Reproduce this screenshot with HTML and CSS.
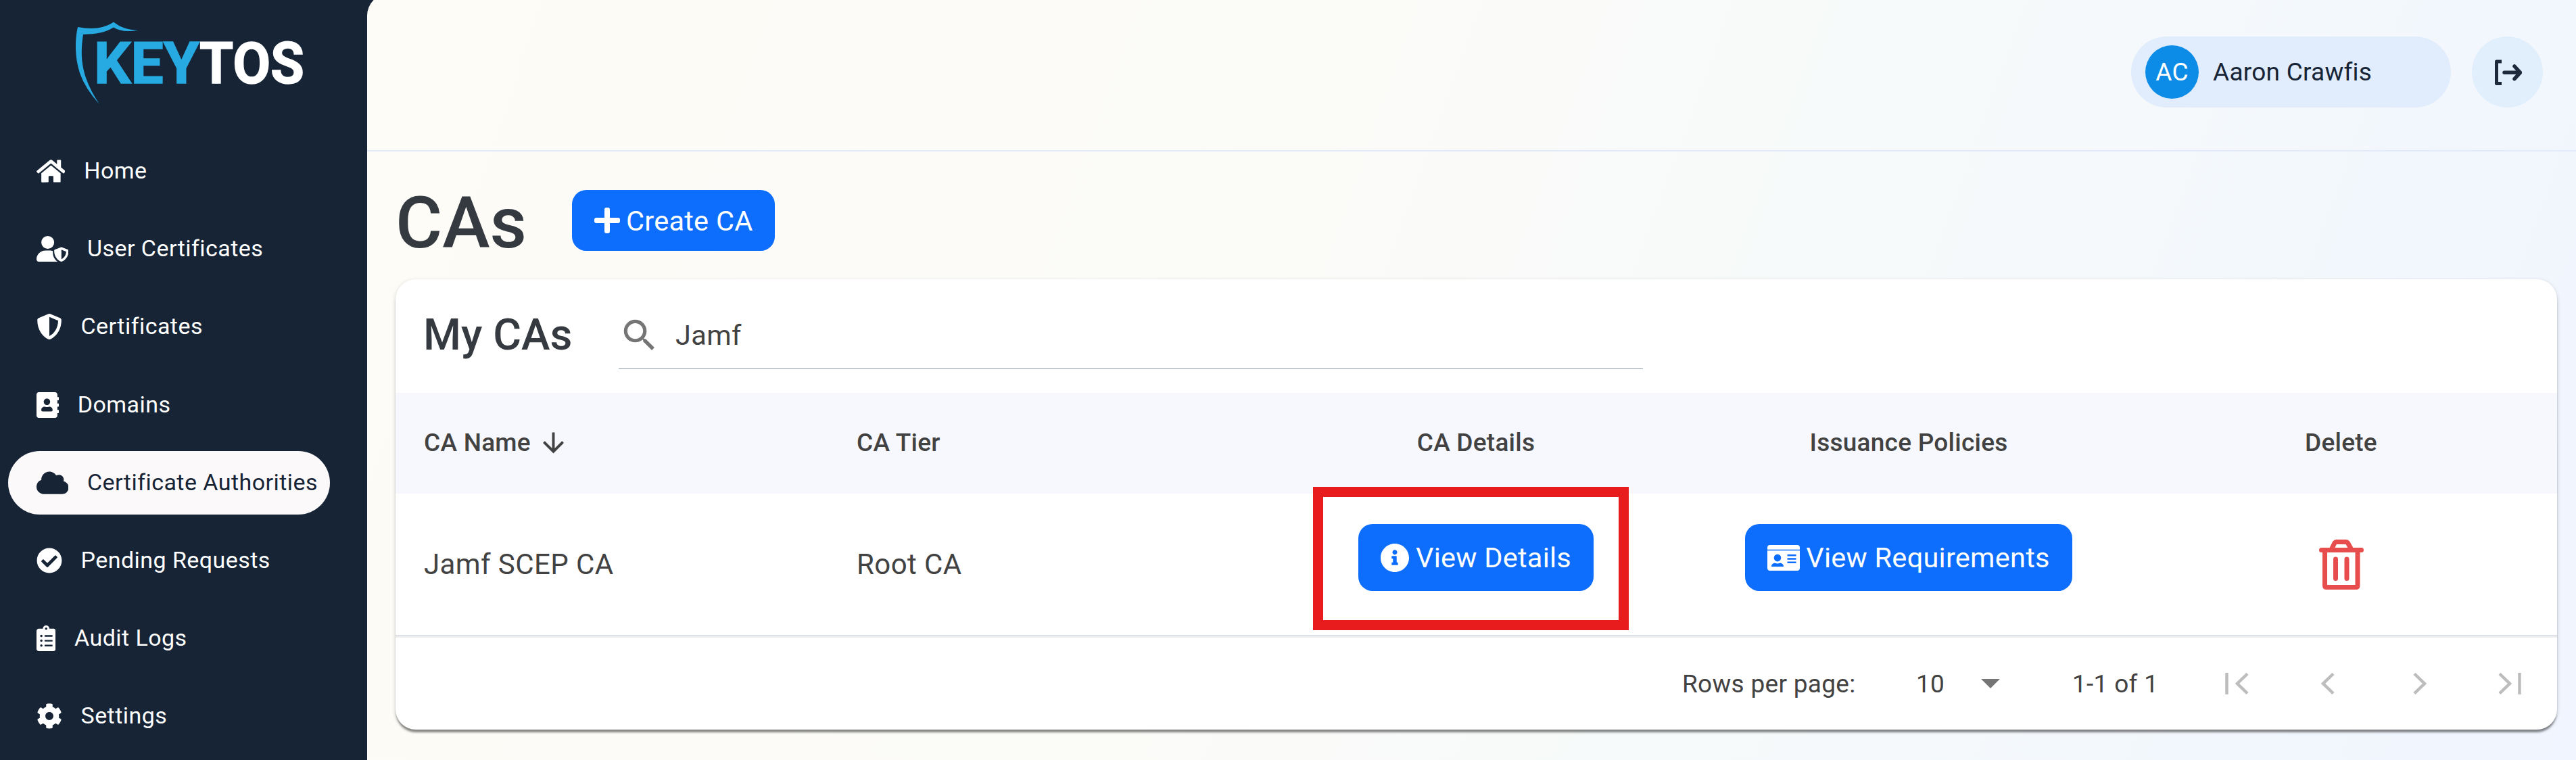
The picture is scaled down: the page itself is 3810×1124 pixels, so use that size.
FILE: index.html
```
<!DOCTYPE html>
<html lang="en">

<head>
    <meta charset="UTF-8">
    <meta name="viewport" content="width=device-width, initial-scale=1.0">
    <title>CAs - Keytos</title>
    <link rel="stylesheet" href="styles.css">
</head>

<body>
    <nav class="sidebar">
        <div class="logo">
            <svg width="345" height="121" viewBox="0 0 345 121">
                <path fill="#27aae1" d="M3 7 C25 11 42 9 56 -.5 C67 8 76 11 92 11.500 C76 14.500 65 13 56 7.500 C43 16 30 17 11 18 C8 38 7 58 15 82 Q22 102 35 121 Q14 98 6 75 C-2 50 -1 25 3 7Z" />
                <text class="logo-text" y="90"><tspan x="27" fill="#27aae1" stroke="#27aae1" textLength="156" lengthAdjust="spacingAndGlyphs">KEY</tspan><tspan x="183" fill="#fff" stroke="#fff" textLength="155" lengthAdjust="spacingAndGlyphs">TOS</tspan></text>
            </svg>
        </div>
        <ul class="menu">
            <li>
                <svg class="icon" viewBox="0 0 576 512"><path d="M280.400 148.300L96 300.100V464a16 16 0 0 0 16 16l112-.3a16 16 0 0 0 16-16V368a16 16 0 0 1 16-16h64a16 16 0 0 1 16 16v95.600a16 16 0 0 0 16 16l112 .3a16 16 0 0 0 16-16V300L295.700 148.300a12.200 12.200 0 0 0-15.300 0zM571.600 251.500L488 182.600V44a12 12 0 0 0-12-12h-56a12 12 0 0 0-12 12v72.600l-89.500-73.700a48 48 0 0 0-61 0L4.300 251.500a12 12 0 0 0-1.600 16.900l25.500 31a12 12 0 0 0 16.900 1.600L280.400 107a12.200 12.200 0 0 1 15.300 0l235.200 194a12 12 0 0 0 16.900-1.600l25.500-31a12 12 0 0 0-1.700-16.900z" /></svg>
                <span>Home</span>
            </li>
            <li>
                <svg class="icon" viewBox="0 0 640 512"><path d="M224 256A128 128 0 1 0 224 0a128 128 0 0 0 0 256zM178 290C80 290 0 366 0 466c0 26 20 46 46 46h374c-48-32-94-98-94-178v-30c-20-9-34-14-56-14z" /><path fill-rule="evenodd" d="M622 271l-115-46a31 31 0 0 0-22 0l-115 46c-11 5-18 15-18 27 0 114 69 188 133 212 7 3 15 3 22 0 52-20 133-87 133-212 0-12-7-22-18-27zM496 462V274l95 38c-5 82-52 130-95 150z" /></svg>
                <span>User Certificates</span>
            </li>
            <li>
                <svg class="icon" viewBox="0 0 512 512"><path d="M466.500 83.700l-192-80a48 48 0 0 0-36.900 0l-192 80C27.700 91.100 16 108.600 16 128c0 198.500 114.500 335.700 221.500 380.300 11.800 4.900 25.100 4.900 36.900 0C360.100 472.600 496 349.300 496 128c0-19.400-11.700-36.900-29.500-44.300zM256.100 446.300l-.1-381 175.900 73.300c-3.300 151.400-82.100 261.100-175.800 307.700z" /></svg>
                <span>Certificates</span>
            </li>
            <li>
                <svg class="icon" viewBox="0 0 448 512"><path d="M436 160c6.600 0 12-5.400 12-12v-40c0-6.600-5.400-12-12-12h-20V48c0-26.500-21.500-48-48-48H48C21.500 0 0 21.500 0 48v416c0 26.500 21.500 48 48 48h320c26.500 0 48-21.500 48-48v-48h20c6.600 0 12-5.400 12-12v-40c0-6.600-5.400-12-12-12h-20v-64h20c6.600 0 12-5.400 12-12v-40c0-6.600-5.400-12-12-12h-20v-64h20zm-228-32c35.300 0 64 28.700 64 64s-28.700 64-64 64-64-28.700-64-64 28.700-64 64-64zm112 236.800c0 10.600-10 19.200-22.400 19.200H118.400C106 384 96 375.400 96 364.800v-19.200c0-31.800 30.100-57.600 67.200-57.600h5c12.300 5.100 25.700 8 39.800 8s27.600-2.900 39.800-8h5c37.100 0 67.200 25.800 67.200 57.600v19.200z" /></svg>
                <span>Domains</span>
            </li>
            <li class="active">
                <svg class="icon" viewBox="0 0 640 512"><path d="M537.600 226.600c4.100-10.700 6.400-22.400 6.400-34.600 0-53-43-96-96-96-19.700 0-38.100 6-53.300 16.200C367 64.200 315.300 32 256 32c-88.400 0-160 71.600-160 160 0 2.700.1 5.400.2 8.100C40.200 219.800 0 273.200 0 336c0 79.500 64.500 144 144 144h368c70.700 0 128-57.300 128-128 0-61.900-44-113.600-102.400-125.400z" /></svg>
                <span>Certificate Authorities</span>
            </li>
            <li>
                <svg class="icon" viewBox="0 0 512 512"><path d="M504 256c0 137-111 248-248 248S8 393 8 256 119 8 256 8s248 111 248 248zM227.300 387.300l184-184c6.200-6.200 6.200-16.400 0-22.600l-22.600-22.600c-6.200-6.200-16.400-6.200-22.600 0L216 308.100l-70.100-70.100c-6.200-6.200-16.400-6.200-22.600 0l-22.600 22.600c-6.200 6.200-6.200 16.400 0 22.600l104 104c6.200 6.300 16.400 6.300 22.600.1z" /></svg>
                <span>Pending Requests</span>
            </li>
            <li>
                <svg class="icon" viewBox="0 0 384 512"><path fill-rule="evenodd" d="M336 64h-80c0-35.300-28.700-64-64-64s-64 28.700-64 64H48C21.500 64 0 85.500 0 112v352c0 26.500 21.500 48 48 48h288c26.500 0 48-21.500 48-48V112c0-26.500-21.500-48-48-48zM192 40a24 24 0 1 1 0 48 24 24 0 0 1 0-48zM96 376a24 24 0 1 1 0 48 24 24 0 0 1 0-48zM96 280a24 24 0 1 1 0 48 24 24 0 0 1 0-48zM96 184a24 24 0 1 1 0 48 24 24 0 0 1 0-48zM168 192h144a8 8 0 0 1 8 8v16a8 8 0 0 1-8 8H168a8 8 0 0 1-8-8v-16a8 8 0 0 1 8-8zM168 288h144a8 8 0 0 1 8 8v16a8 8 0 0 1-8 8H168a8 8 0 0 1-8-8v-16a8 8 0 0 1 8-8zM168 384h144a8 8 0 0 1 8 8v16a8 8 0 0 1-8 8H168a8 8 0 0 1-8-8v-16a8 8 0 0 1 8-8z" /></svg>
                <span>Audit Logs</span>
            </li>
            <li>
                <svg class="icon" viewBox="0 0 512 512"><path d="M487.400 315.700l-42.600-24.600c4.300-23.200 4.300-47 0-70.200l42.600-24.600c4.900-2.800 7.100-8.600 5.500-14-11.100-35.600-30-67.800-54.700-94.600-3.800-4.100-10-5.100-14.800-2.300L380.800 110c-17.900-15.400-38.500-27.300-60.800-35.100V25.800c0-5.600-3.900-10.500-9.400-11.700-36.700-8.200-74.300-7.800-109.200 0-5.500 1.200-9.400 6.100-9.400 11.700V75c-22.200 7.900-42.800 19.800-60.800 35.100L88.700 85.500c-4.900-2.800-11-1.900-14.800 2.300-24.700 26.700-43.600 58.900-54.700 94.600-1.700 5.400.6 11.200 5.500 14L67.300 221c-4.300 23.200-4.300 47 0 70.200l-42.600 24.600c-4.900 2.800-7.100 8.600-5.500 14 11.100 35.600 30 67.800 54.700 94.600 3.800 4.100 10 5.100 14.800 2.300l42.600-24.600c17.900 15.400 38.500 27.300 60.800 35.100v49.200c0 5.600 3.900 10.500 9.400 11.700 36.700 8.200 74.300 7.800 109.200 0 5.500-1.200 9.400-6.100 9.400-11.700v-49.200c22.200-7.900 42.800-19.800 60.800-35.100l42.600 24.600c4.900 2.800 11 1.900 14.800-2.300 24.700-26.700 43.600-58.900 54.700-94.600 1.500-5.500-.7-11.300-5.600-14.100zM256 336c-44.100 0-80-35.900-80-80s35.900-80 80-80 80 35.900 80 80-35.900 80-80 80z" /></svg>
                <span>Settings</span>
            </li>
        </ul>
    </nav>

    <main class="content">
        <header class="topbar">
            <div class="user">
                <span class="avatar">AC</span>
                <span>Aaron Crawfis</span>
            </div>
            <div class="logout">
                <svg width="42" height="38" viewBox="0 0 42 38"><path fill="none" stroke="#1c2a3b" stroke-width="5" stroke-linejoin="round" d="M12 3H4.500V35.500H12" /><path fill="none" stroke="#1c2a3b" stroke-width="5.500" stroke-linecap="round" stroke-linejoin="round" d="M16 19.300H38M31 10L39.500 19.300L31 28.600" /></svg>
            </div>
        </header>

        <div class="page-title">
            <h1>CAs</h1>
            <button class="btn btn-create">
                <svg width="38" height="38" viewBox="0 0 38 38"><path d="M3 15h12V3a3 3 0 0 1 3-3h2a3 3 0 0 1 3 3v12h12a3 3 0 0 1 3 3v2a3 3 0 0 1-3 3H23v12a3 3 0 0 1-3 3h-2a3 3 0 0 1-3-3V23H3a3 3 0 0 1-3-3v-2a3 3 0 0 1 3-3z" /></svg>
                <span>Create CA</span>
            </button>
        </div>

        <section class="card">
            <div class="toolbar">
                <h2>My CAs</h2>
                <div class="search">
                    <svg width="62" height="62" viewBox="0 0 24 24"><path d="M15.500 14h-.79l-.28-.27A6.470 6.470 0 0 0 16 9.500 6.500 6.500 0 1 0 9.500 16c1.610 0 3.090-.59 4.230-1.570l.27.28v.79l5 4.990L20.490 19l-4.990-5zm-6 0C7.010 14 5 11.990 5 9.500S7.010 5 9.500 5 14 7.010 14 9.500 11.990 14 9.500 14z" /></svg>
                    <span>Jamf</span>
                </div>
            </div>
            <div class="row head">
                <div>
                    CA Name
                    <svg class="sort" width="31" height="32" viewBox="4 4 16 16"><path d="M20 12l-1.410-1.410L13 16.170V4h-2v12.170l-5.580-5.590L4 12l8 8 8-8z" /></svg>
                </div>
                <div>CA Tier</div>
                <div class="center">CA Details</div>
                <div class="center">Issuance Policies</div>
                <div class="center">Delete</div>
            </div>
            <div class="row body">
                <div>Jamf SCEP CA</div>
                <div>Root CA</div>
                <div class="center details">
                    <button class="btn">
                        <svg width="42" height="42" viewBox="8 8 496 496"><path d="M256 8C119 8 8 119 8 256s111 248 248 248 248-111 248-248S393 8 256 8zm0 110c23.200 0 42 18.800 42 42s-18.800 42-42 42-42-18.800-42-42 18.800-42 42-42zm56 254c0 6.600-5.400 12-12 12h-88c-6.600 0-12-5.400-12-12v-24c0-6.600 5.400-12 12-12h12v-64h-12c-6.600 0-12-5.400-12-12v-24c0-6.600 5.400-12 12-12h64c6.600 0 12 5.400 12 12v100h12c6.600 0 12 5.400 12 12v24z" /></svg>
                        <span>View Details</span>
                    </button>
                    <div class="highlight"></div>
                </div>
                <div class="center">
                    <button class="btn btn-req">
                        <svg width="48" height="38" viewBox="0 0 48 38"><path fill-rule="evenodd" d="M4 0h40a4 4 0 0 1 4 4v2.700H0V4a4 4 0 0 1 4-4zM0 8.300h48V34a4 4 0 0 1-4 4H4a4 4 0 0 1-4-4zM15 13.800a5.300 5.300 0 1 0 0 10.600 5.300 5.300 0 0 0 0-10.600zM6 32h18c0-3.500-2.500-5.200-5.500-5.200-2 1-5 1-7 0-3 0-5.500 1.700-5.500 5.200zM29.500 14H42.500v2.500H29.500zM29.500 19.200H42.500v2.500H29.500zM29.500 24.500H42.500V27H29.500z" /></svg>
                        <span>View Requirements</span>
                    </button>
                </div>
                <div class="center">
                    <svg class="trash" width="66" height="74" viewBox="0 0 66 74"><path fill="none" stroke="#e84d4d" stroke-width="7" stroke-linejoin="round" stroke-linecap="round" d="M3.500 15.500H62.500M8.500 16V68Q8.500 70.500 11 70.500H54.500Q57 70.500 57 68V16M18 15L23 5Q24 3.500 25.500 3.500H40Q41.500 3.500 42.500 5L48 15M24.500 29V57.500M41 29V57.500" /></svg>
                </div>
            </div>
            <div class="pager">
                <span class="label">Rows per page:</span>
                <span class="size">10</span>
                <svg class="caret" width="28" height="14" viewBox="0 0 28 14"><path d="M0 0H28L14 14Z" /></svg>
                <span class="range">1-1 of 1</span>
                <div class="arrows">
                    <svg width="36" height="32" viewBox="0 0 36 32"><path d="M2.500 0V32M33 1.500L18 16L33 30.500" /></svg>
                    <svg width="22" height="32" viewBox="0 0 22 32"><path d="M19 1.500L4 16L19 30.500" /></svg>
                    <svg class="next" width="22" height="32" viewBox="0 0 22 32"><path d="M3 1.500L18 16L3 30.500" /></svg>
                    <svg width="34" height="32" viewBox="0 0 34 32"><path d="M2 1.500L17 16L2 30.500M31.500 0V32" /></svg>
                </div>
            </div>
        </section>
    </main>
</body>

</html>
```
FILE: styles.css
```
* {
    box-sizing: border-box;
}

body {
    margin: 0;
    height: 1124px;
    display: flex;
    overflow: hidden;
    background: #162436;
    font-family: Roboto, "Liberation Sans", sans-serif;
    color: #424242;
}

h1,
h2,
ul {
    margin: 0;
    padding: 0;
    list-style: none;
}

h1,
h2 {
    font-weight: 500;
}

svg {
    flex: none;
    fill: currentColor;
}

/* sidebar */
.sidebar {
    width: 543px;
    flex: none;
    padding: 33px 0 0 12px;
}

.logo {
    height: 173px;
    padding-left: 100px;
}

.logo svg {
    display: block;
}

.logo-text {
    font-size: 85px;
    font-weight: 700;
    stroke-width: 1.500px;
}

.menu {
    display: flex;
    flex-direction: column;
    gap: 21.200px;
}

.menu li {
    display: flex;
    align-items: center;
    gap: 28px;
    width: 476px;
    height: 94px;
    padding: 0 0 0 41.500px;
    border-radius: 47px;
    color: #fff;
    font-size: 34px;
    letter-spacing: 0.450px;
    white-space: nowrap;
}

.menu span {
    padding-bottom: 2px;
}

.menu .active {
    background: #fcf9fb;
    color: #162436;
}

.icon {
    height: 38px;
}

/* main area */
.content {
    flex: 1;
    margin-top: -9px;
    padding-top: 9px;
    border-top-left-radius: 32px;
    background: linear-gradient(110deg, #fefcf7 0%, #fbfbf8 40%, #f5f9fb 72%, #f0f5ff 100%);
}

.topbar {
    display: flex;
    justify-content: flex-end;
    gap: 31px;
    height: 224px;
    padding: 54px 49px 0 0;
    border-bottom: 2px solid #e1e9fa;
    color: #162436;
    font-size: 37px;
    letter-spacing: 0.250px;
}

.user {
    display: flex;
    align-items: center;
    gap: 21px;
    width: 473px;
    height: 105px;
    padding-left: 21px;
    border-radius: 53px;
    background: #e1edfc;
}

.avatar {
    width: 79px;
    height: 79px;
    border-radius: 50%;
    background: #0c8ce6;
    color: #fff;
    line-height: 79px;
    text-align: center;
}

.logout {
    display: flex;
    align-items: center;
    justify-content: center;
    width: 105px;
    height: 105px;
    border-radius: 50%;
    background: #e1effc;
}

.page-title {
    display: flex;
    align-items: flex-start;
    height: 189px;
    padding-left: 42px;
}

.page-title h1 {
    width: 261px;
    color: #343a40;
    font-size: 106px;
    line-height: 212px;
}

.btn {
    display: flex;
    align-items: center;
    gap: 10px;
    height: 99px;
    padding: 0 33px;
    border: 0;
    border-radius: 21px;
    background: #0d6efd;
    color: #fff;
    font: 400 41.500px Roboto, "Liberation Sans", sans-serif;
    letter-spacing: 0.250px;
    white-space: nowrap;
}

.btn-create {
    gap: 9px;
    height: 90px;
    margin-top: 57px;
}

/* table card */
.card {
    width: 3197px;
    height: 666px;
    margin-left: 42px;
    border-radius: 30px;
    background: #fff;
    box-shadow: 0 5px 3px -1px rgba(0, 0, 0, 0.400), 0 2px 6px rgba(0, 0, 0, 0.180);
}

.toolbar {
    display: flex;
    height: 168px;
    padding-left: 41px;
}

.toolbar h2 {
    width: 289px;
    color: #343a40;
    font-size: 64px;
    line-height: 166px;
}

.search {
    display: flex;
    align-items: center;
    gap: 22px;
    width: 1515px;
    height: 133px;
    padding-top: 34px;
    border-bottom: 2px solid #c4c9ce;
    font-size: 41.500px;
    letter-spacing: 0.400px;
}

.search svg {
    color: #757575;
}

.row {
    display: grid;
    grid-template-columns: 640px 638px 640px 640px 639px;
    align-items: center;
}

.row > div {
    padding-left: 42px;
}

.row .center {
    display: flex;
    justify-content: center;
    padding: 0;
}

.head {
    height: 149px;
    padding-bottom: 2px;
    background: #f7f8fd;
    font-size: 37px;
    font-weight: 500;
    letter-spacing: 0.250px;
}

.sort {
    margin-left: 9px;
    vertical-align: -4px;
}

.body {
    height: 211px;
    border-bottom: 2px solid #dee2e6;
    font-size: 42px;
    letter-spacing: 0.400px;
}

.body .btn {
    margin-bottom: 20px;
}

.body .btn-req {
    gap: 9px;
}

.details {
    position: relative;
}

/* red frame drawn over the details button */
.highlight {
    position: absolute;
    top: -55px;
    left: 79px;
    width: 467px;
    height: 212px;
    border: 15px solid #e81c1c;
}

.pager {
    display: flex;
    align-items: center;
    height: 138px;
    padding-left: 1903px;
    border-top: 2px solid #eee;
    font-size: 37px;
    letter-spacing: 0.300px;
}

.label {
    width: 346px;
}

.size {
    width: 96px;
}

.caret {
    width: 28px;
    color: #757575;
}

.range {
    width: 225px;
    padding-left: 107px;
    white-space: nowrap;
}

.arrows {
    display: flex;
    gap: 105px;
    margin-left: 108px;
    color: #bdbdbd;
}

.arrows .next {
    margin-left: 9px;
}

.arrows path {
    fill: none;
    stroke: currentColor;
    stroke-width: 4.500;
}
```
